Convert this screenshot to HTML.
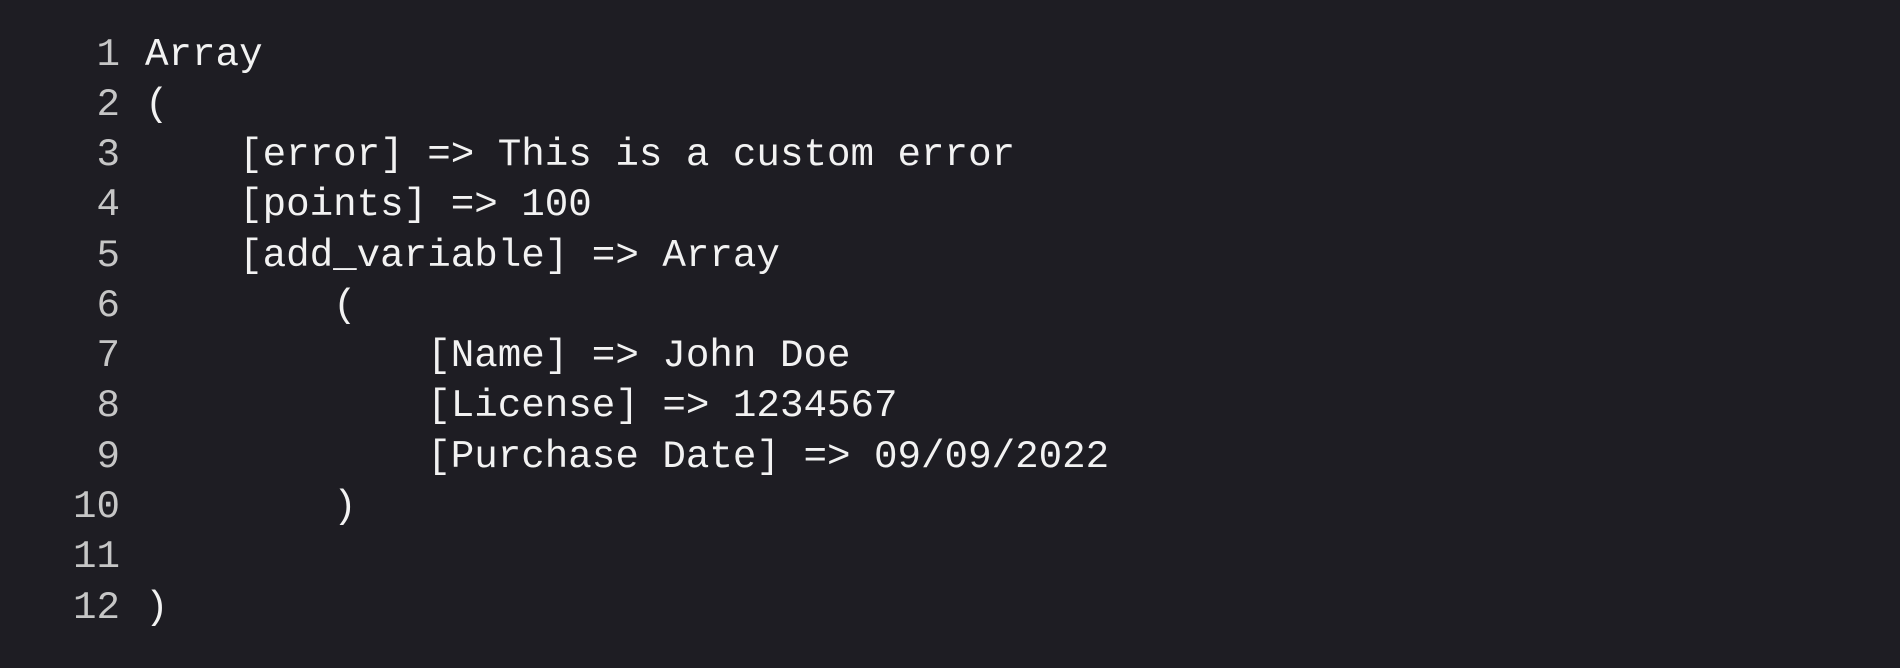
<!DOCTYPE html>
<html><head><meta charset="utf-8"><style>
html,body{margin:0;padding:0;background:#1e1d23;width:1900px;height:668px;overflow:hidden}
.l{position:absolute;left:0;height:50px;font-family:"Liberation Mono",monospace;font-size:39.2px;line-height:50px;white-space:pre}
.n{position:absolute;right:1780px;color:#c6c6c6;text-align:right}
.t{position:absolute;left:145px;color:#f2f2f2}
</style></head><body>
<div style="position:relative;width:1900px;height:668px">
<div class="l" style="top:30px;width:1900px"><span class="n">1</span><span class="t">Array</span></div>
<div class="l" style="top:80px;width:1900px"><span class="n">2</span><span class="t">(</span></div>
<div class="l" style="top:130px;width:1900px"><span class="n">3</span><span class="t">    [error] =&gt; This is a custom error</span></div>
<div class="l" style="top:180px;width:1900px"><span class="n">4</span><span class="t">    [points] =&gt; 100</span></div>
<div class="l" style="top:231px;width:1900px"><span class="n">5</span><span class="t">    [add_variable] =&gt; Array</span></div>
<div class="l" style="top:281px;width:1900px"><span class="n">6</span><span class="t">        (</span></div>
<div class="l" style="top:331px;width:1900px"><span class="n">7</span><span class="t">            [Name] =&gt; John Doe</span></div>
<div class="l" style="top:381px;width:1900px"><span class="n">8</span><span class="t">            [License] =&gt; 1234567</span></div>
<div class="l" style="top:432px;width:1900px"><span class="n">9</span><span class="t">            [Purchase Date] =&gt; 09/09/2022</span></div>
<div class="l" style="top:482px;width:1900px"><span class="n">10</span><span class="t">        )</span></div>
<div class="l" style="top:532px;width:1900px"><span class="n">11</span><span class="t"></span></div>
<div class="l" style="top:583px;width:1900px"><span class="n">12</span><span class="t">)</span></div>
</div>
</body></html>
